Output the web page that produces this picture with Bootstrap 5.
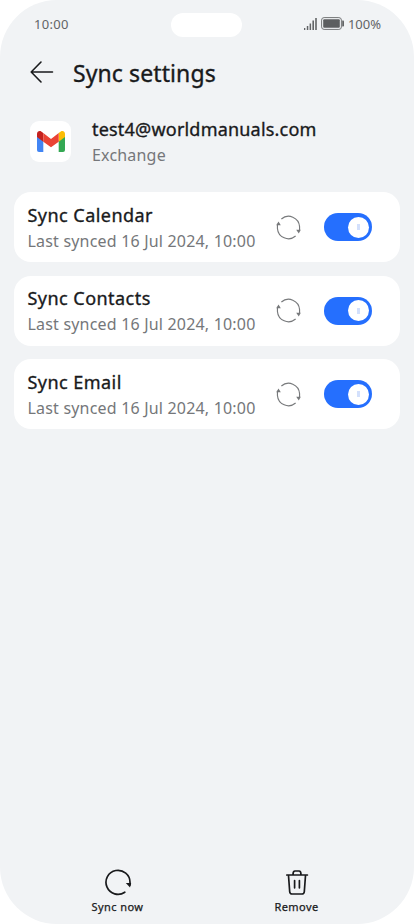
<!DOCTYPE html>
<html lang="en">
<head>
<meta charset="utf-8">
<meta name="viewport" content="width=device-width, initial-scale=1">
<title>Sync settings</title>
<link href="https://cdn.jsdelivr.net/npm/bootstrap@5.3.0/dist/css/bootstrap.min.css" rel="stylesheet">
<style>
body{background:#fff;font-family:"Noto Sans","Open Sans",sans-serif;color:#191a1c}
.phone{width:414px;height:924px;background:#f1f3f5;border-radius:57px;overflow:hidden}
.status{height:48px;padding:0 33px 1px 34px;font-size:13px;line-height:46px;color:#626466}
.time-label,.status-right{width:90px}
.time-label{letter-spacing:.3px}
.camera{width:71px;height:24px;border-radius:12px;background:#fff;margin:2px 3px 0 0}
.topbar{height:48px;padding-left:30px;gap:19px}
.page-title,.account-name,.sync-title,.action{font-weight:400;-webkit-text-stroke:.35px #191a1c}
.page-title{font-size:23px;line-height:48px;letter-spacing:.1px;padding-top:1px}
.account{height:96px;padding:20px 0 0 30px;gap:21px}
.app-icon{width:41px;height:41px;border-radius:9px;background:#fff;margin-top:5px}
.account-name{font-size:18px;line-height:26px;letter-spacing:.2px}
.subtext{font-size:16px;line-height:26px;color:#75777a;white-space:nowrap;letter-spacing:.19px}
.sync-list{padding:0 14px;gap:13.5px}
.sync-card{height:70px;border-radius:17px;border:0;padding:0 28px 0 13.5px}
.sync-text{padding-top:1px}
.sync-title{font-size:18px;line-height:26px;letter-spacing:.46px}
.cycle-icon{margin-right:23px}
.switch{width:48.5px;height:28px;border-radius:14px;background:#256ffe;padding-right:3.5px}
.knob{width:21px;height:21px;border-radius:50%;background:#fff}
.knob i{width:3px;height:6px;background:#d3e0fc}
.bottom-bar{height:56px;padding-left:28px;padding-right:28px}
.action{font-size:11px;line-height:17px;letter-spacing:.42px;-webkit-text-stroke-width:.25px}
svg{display:block;flex:none}
</style>
</head>
<body>
<svg width="0" height="0" class="position-absolute">
<symbol id="cycle" viewBox="0 0 26 26"><g fill="none" stroke="#77797b" stroke-width="1.2"><path d="M5.6 4.1A11.5 11.5 0 0 1 24.5 12V17"/><path d="M20.4 21.9A11.5 11.5 0 0 1 1.5 14V9"/></g><path fill="#77797b" d="M21 15.3h4.7l-2 4zM.3 10.7l2.3-4 2.4 4z"/></symbol>
</svg>
<main class="phone d-flex flex-column">
<div class="status d-flex justify-content-between align-items-center">
<div class="time-label" id="clock">10:00</div>
<div class="camera"></div>
<div class="status-right d-flex align-items-center justify-content-end gap-1">
<svg width="13" height="13" viewBox="0 0 13 13" fill="#626466"><path d="M0 11h1.3v2H0zM2.8 9h1.5v4H2.8zM5.6 6.5h1.5V13H5.6zM8.4 3.5h1.6V13H8.4zM11.2 1h1.6v12h-1.6z"/></svg>
<svg width="23" height="13" viewBox="0 0 23 13"><rect x=".6" y=".6" width="19.8" height="11.8" rx="2.5" fill="none" stroke="#737577"/><rect x="2.2" y="2.2" width="16.6" height="8.6" rx="1" fill="#5c5e60"/><path d="M21.2 3.5h1q.8 0 .8.8v4.4q0 .8-.8.8h-1z" fill="#626466"/></svg>
<span id="pct">100%</span>
</div>
</div>
<header class="topbar d-flex align-items-center">
<svg width="24" height="24" viewBox="0 0 24 24" fill="none" stroke="#191a1c" stroke-width="1.6" stroke-linecap="round" stroke-linejoin="round"><path d="M11 2 1.2 12 11 22M1.5 12h21"/></svg>
<h1 class="page-title m-0">Sync settings</h1>
</header>
<section class="account d-flex">
<div class="app-icon d-flex align-items-center justify-content-center">
<svg width="28" height="21" viewBox="0 0 28 21"><path fill="#4285f4" d="M0 5 6.3 9v12H2q-2 0-2-2z"/><path fill="#34a853" d="M21.7 9 28 5v14q0 2-2 2h-4.3z"/><path fill="#fbbc04" d="M21.7 2 23.8.6C25.6-.7 28 .6 28 3v3l-6.3 4.7z"/><path fill="#c5221f" d="M0 3C0 .6 2.4-.7 4.2.6L6.3 2v8.7L0 6z"/><path fill="#ea4335" d="M6.3 2 14 8l7.7-6v8.7L14 16.2l-7.7-5.5z"/></svg>
</div>
<div><div class="account-name">test4@worldmanuals.com</div><div class="subtext">Exchange</div></div>
</section>
<section class="sync-list d-flex flex-column flex-grow-1">
<div class="sync-card card flex-row align-items-center justify-content-between"><div class="sync-text"><div class="sync-title">Sync Calendar</div><div class="subtext">Last synced 16 Jul 2024, 10:00</div></div><div class="d-flex align-items-center"><svg class="cycle-icon" width="25" height="25"><use href="#cycle"/></svg><div class="switch d-flex align-items-center justify-content-end"><div class="knob d-flex align-items-center justify-content-center"><i></i></div></div></div></div>
<div class="sync-card card flex-row align-items-center justify-content-between"><div class="sync-text"><div class="sync-title">Sync Contacts</div><div class="subtext">Last synced 16 Jul 2024, 10:00</div></div><div class="d-flex align-items-center"><svg class="cycle-icon" width="25" height="25"><use href="#cycle"/></svg><div class="switch d-flex align-items-center justify-content-end"><div class="knob d-flex align-items-center justify-content-center"><i></i></div></div></div></div>
<div class="sync-card card flex-row align-items-center justify-content-between"><div class="sync-text"><div class="sync-title">Sync Email</div><div class="subtext">Last synced 16 Jul 2024, 10:00</div></div><div class="d-flex align-items-center"><svg class="cycle-icon" width="25" height="25"><use href="#cycle"/></svg><div class="switch d-flex align-items-center justify-content-end"><div class="knob d-flex align-items-center justify-content-center"><i></i></div></div></div></div>
</section>
<footer class="bottom-bar d-flex">
<div class="action col-6 d-flex flex-column align-items-center"><svg width="28" height="30" viewBox="0 0 28 30"><path d="M20.8 24.2A12 12 0 1 1 26 14.5V17" fill="none" stroke="#191a1c" stroke-width="1.7" stroke-linecap="round"/><path d="M21.8 15h5.4l-1.2 4.6z" fill="#191a1c"/></svg><span>Sync now</span></div>
<div class="action col-6 d-flex flex-column align-items-center"><svg width="28" height="30" viewBox="0 0 28 30" fill="none" stroke="#191a1c" stroke-width="1.7" stroke-linecap="round" stroke-linejoin="round"><path d="M3.8 7h20.6M10 6.5Q10 3 12 3h4q2 0 2 3.5M5.5 7.5l1.2 16.2q.2 2.3 2.5 2.3h9.6q2.3 0 2.5-2.3l1.2-16.2M11.6 12.5v7.3M16.4 12.5v7.3"/></svg><span>Remove</span></div>
</footer>
</main>
<script src="https://cdn.jsdelivr.net/npm/bootstrap@5.3.0/dist/js/bootstrap.bundle.min.js"></script>
</body>
</html>
